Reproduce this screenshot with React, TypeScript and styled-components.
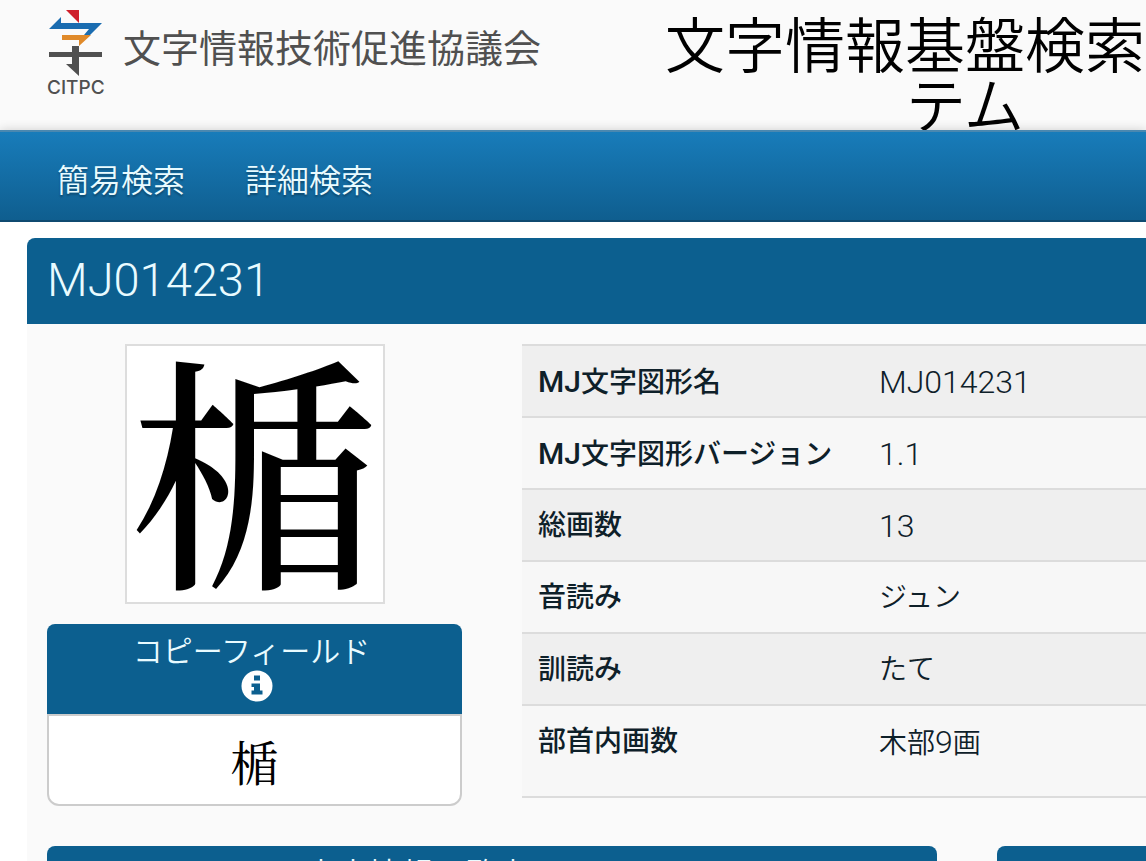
import React from "react";
import styled, { createGlobalStyle } from "styled-components";

const BLUE = "#0c5f8f";

const GlobalStyle = createGlobalStyle`
  *, *::before, *::after { box-sizing: border-box; }
  body {
    margin: 0;
    background: #fff;
    color: #0e2029;
    font-family: Roboto, "Noto Sans CJK JP", sans-serif;
    font-weight: 350;
  }
`;

const Page = styled.div`
  display: flex;
  flex-direction: column;
  height: 100vh;
  overflow: hidden;
`;

const Header = styled.header`
  display: flex;
  height: 130px;
  padding-left: 47px;
  flex: none;
  background: #fafafa;
`;

const Brand = styled.a`
  display: flex;
  flex: 0 0 618px;
  gap: 18px;
  color: #505050;
  text-decoration: none;
`;

const Mark = styled.span`
  display: flex;
  flex-direction: column;
  width: 58px;
  padding-top: 8px;
  font: 500 19px/20px Inter, sans-serif;

  svg {
    display: block;
    margin-bottom: 1px;
  }
`;

const BrandName = styled.span`
  padding-top: 21px;
  font-size: 38px;
  font-weight: 400;
  line-height: 56px;
  white-space: nowrap;
`;

const SiteTitle = styled.h1`
  flex: 0 0 600px;
  margin: 0;
  padding-top: 18px;
  color: #000;
  font-size: 60px;
  font-weight: 350;
  line-height: 60px;
  text-align: center;
`;

const Nav = styled.nav`
  display: flex;
  flex: none;
  height: 92px;
  padding: 8px 27px 0;
  border-top: 2px solid #4a88b0;
  border-bottom: 2px solid #0f4a70;
  background: linear-gradient(#187cba, #0f5e8f);
  box-shadow: 0 0 10px rgba(0, 0, 0, 0.18);
`;

const NavLink = styled.a`
  padding: 0 30px;
  color: #e9fbff;
  font-size: 32px;
  line-height: 82px;
  text-decoration: none;
  text-shadow: 0 2px 2px rgba(0, 0, 0, 0.3);
`;

const Main = styled.main`
  flex: 1;
  padding: 16px 0 0 27px;
  background: #fff;
`;

const Panel = styled.section`
  min-height: 100%;
  border-top-left-radius: 8px;
  background: #fafafa;
`;

const PanelTitle = styled.h2`
  height: 86px;
  margin: 0;
  padding-left: 20px;
  border-top-left-radius: 8px;
  background: ${BLUE};
  color: #e9fbff;
  font-size: 47px;
  font-weight: 350;
  line-height: 84px;
`;

const Columns = styled.div<{ $left: number; $right: number; $top: number }>`
  display: grid;
  grid-template-columns: minmax(0, ${p => p.$left}fr) minmax(0, ${p => p.$right}fr);
  column-gap: 60px;
  align-items: start;
  padding: ${p => p.$top}px 0 0 20px;
`;

const GlyphColumn = styled.div`
  display: flex;
  flex-direction: column;
  gap: 20px;
`;

const GlyphFrame = styled.div`
  align-self: center;
  width: 260px;
  height: 260px;
  border: 2px solid #ddd;
  background: #fff;
  color: #000;
  font: 500 248px/234px "Noto Serif CJK JP", serif;
  text-align: center;
  overflow: hidden;
`;

const CopyHeader = styled.div`
  display: flex;
  flex-direction: column;
  align-items: center;
  height: 90px;
  padding-top: 10px;
  border-radius: 8px 8px 0 0;
  background: ${BLUE};
  color: #e9fbff;
`;

const CopyLabel = styled.label`
  padding-right: 6px;
  font-size: 30px;
  line-height: 36px;
`;

const InfoButton = styled.button`
  display: flex;
  margin: 0 0 0 5px;
  padding: 0;
  border: 0;
  background: none;
`;

const CopyInput = styled.input`
  display: block;
  width: 100%;
  height: 92px;
  padding: 0;
  border: 2px solid #ccc;
  border-radius: 0 0 12px 12px;
  background: #fff;
  color: #000;
  font: 400 48px "Noto Serif CJK JP", serif;
  text-align: center;
  outline: none;
`;

const Table = styled.table`
  width: 100%;
  border-collapse: separate;
  border-spacing: 0;
  border-bottom: 2px solid #dcdcdc;
  table-layout: fixed;
`;

const Row = styled.tr`
  height: 72px;
  background: #f7f7f7;

  &:nth-child(odd) { background: #efefef; }
  &:last-child { height: 92px; }
`;

const cell = `
  padding: 16px 0 0 16px;
  border-top: 2px solid #dcdcdc;
  font-size: 28px;
  line-height: 40px;
  text-align: left;
  vertical-align: top;
  white-space: nowrap;
`;

const HeadCell = styled.th`
  ${cell}
  width: 341px;
  font-weight: 500;
`;

const ValueCell = styled.td`
  ${cell}
  font-weight: 350;
`;

const Latin = styled.span<{ $wide?: boolean }>`
  font-size: ${p => (p.$wide ? 32 : 30)}px;
`;

const BoxHeader = styled.h3<{ $open?: boolean }>`
  height: 90px;
  margin: 0;
  padding: 9px 150px 0 0;
  border-radius: ${p => (p.$open ? "8px 0 0 0" : "8px 8px 0 0")};
  background: ${BLUE};
  color: #e9fbff;
  font-size: 32px;
  font-weight: 350;
  line-height: 40px;
  text-align: center;
`;

const Logo = () => (
  <svg width="57" height="69" viewBox="0 0 57 69" aria-hidden="true">
    <path d="M19 2h13v13z" fill="#cf1f2b" />
    <path d="M2 21 14 9v6h41L43 27h-6l5-6z" fill="#1a6cb0" />
    <path d="M15 27h29L32 38v-6H15z" fill="#e08a2a" />
    <path d="M25 38h7v6h23v5H32v19L19 56h6v-7H2v-5h23z" fill="#505050" />
  </svg>
);

const InfoIcon = () => (
  <svg width="32" height="32" viewBox="0 0 32 32" aria-hidden="true">
    <circle cx="16" cy="16" r="15.5" fill="#fff" />
    <path d="M13 5.5h6v5h-6zM10.5 13.5H19v7h2.5v4h-11v-4H13V17h-2.500z" fill={BLUE} />
  </svg>
);

const rows: { name: React.ReactNode; value: React.ReactNode }[] = [
  { name: <><Latin>MJ</Latin>文字図形名</>, value: <Latin $wide>MJ014231</Latin> },
  { name: <><Latin>MJ</Latin>文字図形バージョン</>, value: <Latin $wide>1.1</Latin> },
  { name: "総画数", value: <Latin $wide>13</Latin> },
  { name: "音読み", value: "ジュン" },
  { name: "訓読み", value: "たて" },
  { name: "部首内画数", value: <>木部<Latin $wide>9</Latin>画</> },
];

export default function App() {
  return (
    <Page lang="ja">
      <GlobalStyle />
      <Header>
        <Brand href="#">
          <Mark>
            <Logo />
            CITPC
          </Mark>
          <BrandName>文字情報技術促進協議会</BrandName>
        </Brand>
        <SiteTitle>文字情報基盤検索システム</SiteTitle>
      </Header>
      <Nav>
        <NavLink href="#simple">簡易検索</NavLink>
        <NavLink href="#detail">詳細検索</NavLink>
      </Nav>
      <Main>
        <Panel>
          <PanelTitle>MJ014231</PanelTitle>
          <Columns $left={415} $right={624} $top={20}>
            <GlyphColumn>
              <GlyphFrame>楯</GlyphFrame>
              <div>
                <CopyHeader>
                  <CopyLabel htmlFor="copy">コピーフィールド</CopyLabel>
                  <InfoButton type="button" aria-label="説明">
                    <InfoIcon />
                  </InfoButton>
                </CopyHeader>
                <CopyInput id="copy" readOnly value="楯" />
              </div>
            </GlyphColumn>
            <Table>
              <tbody>
                {rows.map((r, i) => (
                  <Row key={i}>
                    <HeadCell scope="row">{r.name}</HeadCell>
                    <ValueCell>{r.value}</ValueCell>
                  </Row>
                ))}
              </tbody>
            </Table>
          </Columns>
          <Columns $left={890} $right={149} $top={40}>
            <BoxHeader>文字情報一覧表</BoxHeader>
            <BoxHeader $open />
          </Columns>
        </Panel>
      </Main>
    </Page>
  );
}
